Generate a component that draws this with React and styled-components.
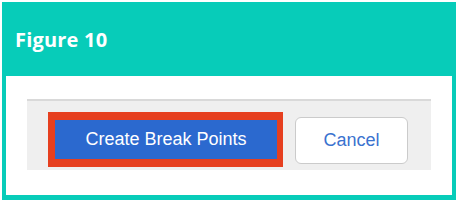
import React from 'react';
import styled, { createGlobalStyle } from 'styled-components';

const GlobalStyle = createGlobalStyle`
	body {
		margin: 0;
		background: #ffffff;
	}
`;

const Frame = styled.div`
	display: flex;
	flex-direction: column;
	width: 454px;
	height: 198px;
	margin: 2px;
	background: #07ccb9;
`;

const Header = styled.h1`
	display: flex;
	align-items: center;
	height: 74px;
	margin: 0;
	padding-left: 13px;
	color: #ffffff;
	font-family: 'Open Sans', sans-serif;
	font-weight: 700;
	font-size: 20px;
	letter-spacing: 0.2px;
`;

const Content = styled.div`
	flex: 1;
	margin: 0 4px 5px 4px;
	padding: 23px 0 0 21px;
	background: #ffffff;
`;

const ButtonBar = styled.div`
	display: flex;
	align-items: flex-start;
	gap: 12px;
	width: 383px;
	height: 58px;
	padding: 11px 0 0 21px;
	background: #efefef;
	border-top: 2px solid #d9d9d9;
`;

const Highlight = styled.div`
	padding: 8px 6px 8px 7px;
	background: #e63f1f;
`;

const Button = styled.button`
	display: flex;
	align-items: center;
	justify-content: center;
	padding: 0;
	font-family: 'Liberation Sans', Arial, sans-serif;
	font-size: 18px;
	width: ${p => (p.$primary ? '222px' : '113px')};
	height: ${p => (p.$primary ? '39px' : '47px')};
	margin-top: ${p => (p.$primary ? '0' : '5px')};
	border: ${p => (p.$primary ? 'none' : '1.5px solid #cbcbcb')};
	border-radius: ${p => (p.$primary ? '0' : '6px')};
	background: ${p => (p.$primary ? '#2b69cf' : '#ffffff')};
	color: ${p => (p.$primary ? '#ffffff' : '#3a72cf')};
`;

export default function App() {
	return (
		<>
			<GlobalStyle />
			<Frame>
				<Header>Figure 10</Header>
				<Content>
					<ButtonBar>
						<Highlight>
							<Button $primary>Create Break Points</Button>
						</Highlight>
						<Button>Cancel</Button>
					</ButtonBar>
				</Content>
			</Frame>
		</>
	);
}
